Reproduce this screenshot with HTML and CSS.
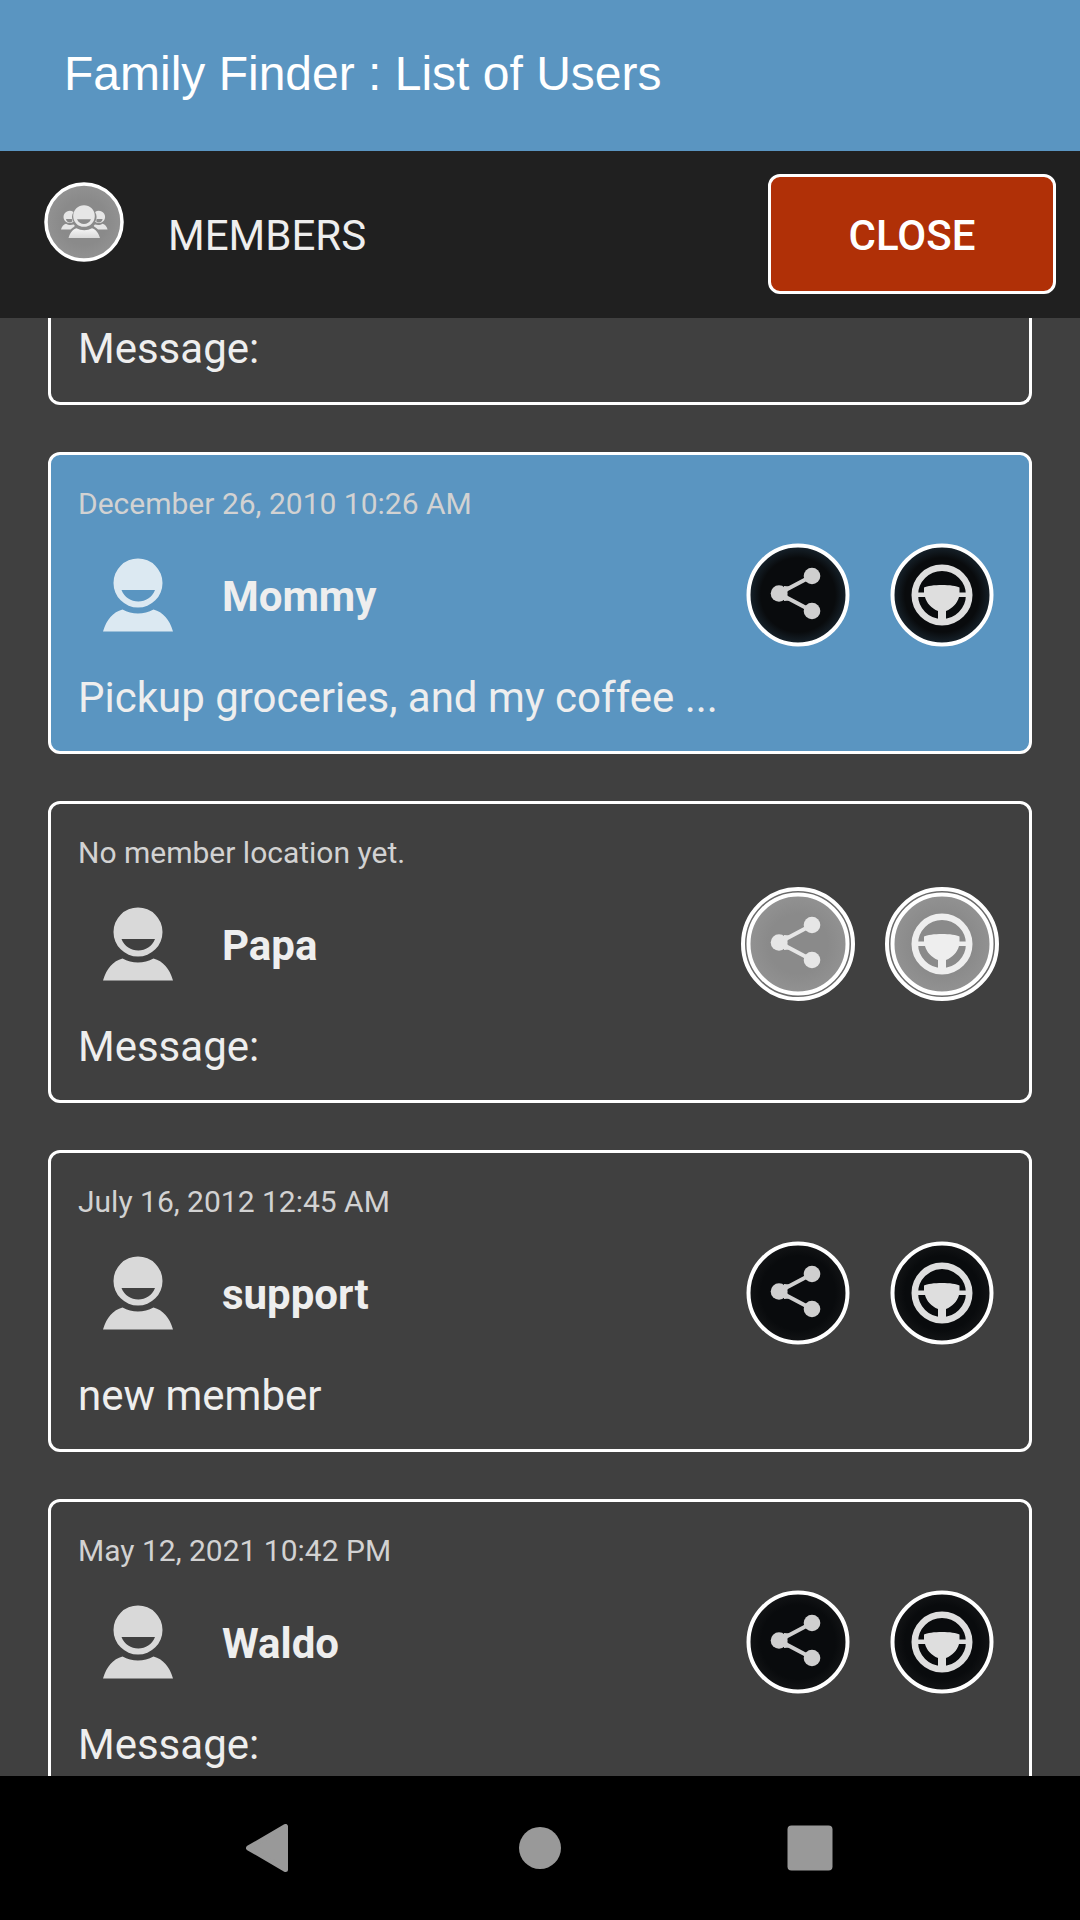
FILE: index.html
```html
<!DOCTYPE html>
<html lang="en">
<head>
<meta charset="utf-8">
<meta name="viewport" content="width=device-width, initial-scale=1">
<title>Family Finder : List of Users</title>
<link rel="stylesheet" href="styles.css">
</head>
<body>
<svg class="sprite" aria-hidden="true">
  <defs>
    <radialGradient id="dark"><stop offset="0.75" stop-color="#090b0d"/><stop offset="1" stop-color="#090b0d" stop-opacity="0.82"/></radialGradient>
    <radialGradient id="grey"><stop offset="0.6" stop-color="#8a8a8a"/><stop offset="1" stop-color="#929292"/></radialGradient>
    <linearGradient id="body" x1="0" y1="0" x2="0" y2="1"><stop offset="0.2" stop-color="#f0f0f0"/><stop offset="1" stop-color="#dadada"/></linearGradient>
  </defs>
  <symbol id="person" viewBox="0 0 70 74">
    <path fill-rule="evenodd" d="M10.500 25a24.500 24.500 0 0 1 49 0a24.500 24.500 0 0 1-49 0zM18.500 32C21.500 39.500 28 43.500 35.300 43.500S49 39.500 52 32z"/>
    <path d="M0 73.500C3.500 61.500 10 54 19.500 51.500C29 56.800 41 56.800 50.500 51.500C60 54 66.500 61.500 70 73.500z"/>
  </symbol>
  <symbol id="share" viewBox="0 0 116 116">
    <path fill="none" stroke="currentColor" stroke-width="4" d="M72 39L39 56.500L72 74"/>
    <path d="M44 49L50 49.500C46.500 53 46.500 60 50 63.500L44 64z"/>
    <circle cx="39" cy="56.500" r="8.300"/><circle cx="72" cy="39" r="8.300"/><circle cx="72" cy="74" r="8.300"/>
  </symbol>
  <symbol id="wheel" viewBox="0 0 116 116">
    <circle cx="58" cy="58" r="27.200" fill="none" stroke="currentColor" stroke-width="6.600"/>
    <path d="M32 55.500H40V50.500C46 47 70 47 75.500 50.500V55.500H84V60H75C73.500 66 68.500 71.500 62 74V86H54V74C47.500 71.500 42.500 66 41 60H32z"/>
  </symbol>
</svg>

<header class="app-header"><h1 class="app-title">Family Finder : List of Users</h1></header>

<div class="toolbar">
  <svg class="group-icon" viewBox="0 0 80 80" aria-hidden="true">
    <circle cx="40" cy="40" r="38" fill="url(#grey)" stroke="#fff" stroke-width="3.500"/>
    <g fill="#e6e6e6" fill-rule="evenodd">
      <path id="side" d="M19.500 35a6.300 6.300 0 0 1 10-5C27.500 33 27.500 37 29.500 39.800A6.300 6.300 0 0 1 19.500 35zM22 37c.5 3.500 4 4.500 6.500 2.200L27.800 37zM17 47.500C17.800 44.500 19.500 42.500 22 41.800C24 43.200 27 43.400 29.500 42.600C31 43.500 31.500 44.300 29 45.500L26.500 47.500z"/>
      <use href="#side" transform="translate(80.600 0) scale(-1 1)"/>
      <path d="M29.200 34a10.800 10.800 0 0 1 21.600 0a10.800 10.800 0 0 1-21.600 0zM33 37.300C34.500 40.600 37 42 40 42S45.500 40.600 47 37.300z"/>
      <path fill="url(#body)" d="M24.500 56C26 51 28.500 47.500 32.500 46.300C37 48.800 43.500 48.800 48 46.300C52 47.500 54.500 51 56 56z"/>
    </g>
  </svg>
  <h2 class="toolbar-title">MEMBERS</h2>
  <button class="close" type="button">CLOSE</button>
</div>

<main class="members">
  <article class="card card-tail">
    <p class="message">Message:</p>
  </article>

  <article class="card card-selected">
    <p class="date">December 26, 2010 10:26 AM</p>
    <div class="row">
      <svg class="avatar" aria-hidden="true"><use href="#person"/></svg>
      <h3 class="name">Mommy</h3>
      <button class="action" type="button" aria-label="Share"><svg viewBox="0 0 116 116"><circle class="disc" cx="58" cy="58" r="49.500"/><use href="#share"/></svg></button>
      <button class="action wheel" type="button" aria-label="Drive"><svg viewBox="0 0 116 116"><circle class="disc" cx="58" cy="58" r="49.500"/><use href="#wheel"/></svg></button>
    </div>
    <p class="message">Pickup groceries, and my coffee ...</p>
  </article>

  <article class="card">
    <p class="date">No member location yet.</p>
    <div class="row">
      <svg class="avatar" aria-hidden="true"><use href="#person"/></svg>
      <h3 class="name">Papa</h3>
      <button class="action" type="button" aria-label="Share" disabled><svg viewBox="0 0 116 116"><circle class="halo" cx="58" cy="58" r="55"/><circle class="disc" cx="58" cy="58" r="49.500"/><use href="#share"/></svg></button>
      <button class="action wheel" type="button" aria-label="Drive" disabled><svg viewBox="0 0 116 116"><circle class="halo" cx="58" cy="58" r="55"/><circle class="disc" cx="58" cy="58" r="49.500"/><use href="#wheel"/></svg></button>
    </div>
    <p class="message">Message:</p>
  </article>

  <article class="card">
    <p class="date">July 16, 2012 12:45 AM</p>
    <div class="row">
      <svg class="avatar" aria-hidden="true"><use href="#person"/></svg>
      <h3 class="name">support</h3>
      <button class="action" type="button" aria-label="Share"><svg viewBox="0 0 116 116"><circle class="disc" cx="58" cy="58" r="49.500"/><use href="#share"/></svg></button>
      <button class="action wheel" type="button" aria-label="Drive"><svg viewBox="0 0 116 116"><circle class="disc" cx="58" cy="58" r="49.500"/><use href="#wheel"/></svg></button>
    </div>
    <p class="message">new member</p>
  </article>

  <article class="card">
    <p class="date">May 12, 2021 10:42 PM</p>
    <div class="row">
      <svg class="avatar" aria-hidden="true"><use href="#person"/></svg>
      <h3 class="name">Waldo</h3>
      <button class="action" type="button" aria-label="Share"><svg viewBox="0 0 116 116"><circle class="disc" cx="58" cy="58" r="49.500"/><use href="#share"/></svg></button>
      <button class="action wheel" type="button" aria-label="Drive"><svg viewBox="0 0 116 116"><circle class="disc" cx="58" cy="58" r="49.500"/><use href="#wheel"/></svg></button>
    </div>
    <p class="message">Message:</p>
  </article>
</main>

<nav class="system-nav" aria-label="System">
  <button type="button" aria-label="Back"><svg viewBox="0 0 48 48"><path d="M2.500 24L39.500 2.500V45.500z" stroke="#999" stroke-width="5" stroke-linejoin="round"/></svg></button>
  <button type="button" aria-label="Home"><svg viewBox="0 0 48 48"><circle cx="24" cy="24" r="21"/></svg></button>
  <button type="button" aria-label="Recent apps"><svg viewBox="0 0 48 48"><rect x="1.500" y="1.500" width="45" height="45" rx="4"/></svg></button>
</nav>
</body>
</html>
```
FILE: styles.css
```css
* {
  box-sizing: border-box;
}

body {
  margin: 0;
  height: 100vh;
  display: flex;
  flex-direction: column;
  overflow: hidden;
  background: #404040;
  color: #eee;
  font-family: Roboto, sans-serif;
  font-size: 42px;
  line-height: 50px;
}

h1, h2, h3, p {
  margin: 0;
  font-size: inherit;
  font-weight: 400;
}

button {
  padding: 0;
  border: 0;
  background: none;
  color: inherit;
  font: inherit;
}

svg {
  display: block;
}

.sprite {
  position: absolute;
  width: 0;
  height: 0;
}

.app-header {
  flex: none;
  padding: 46px 64px 49px;
  background: #5a95c1;
  color: #fff;
}

.app-title {
  font-family: "Liberation Sans", Arial, sans-serif;
  font-size: 48px;
  line-height: 56px;
}

.toolbar {
  flex: none;
  display: flex;
  align-items: center;
  padding: 23px 24px 24px 44px;
  background: #202020;
}

.group-icon {
  width: 80px;
  height: 80px;
  align-self: flex-start;
  margin-top: 8px;
}

.toolbar-title {
  flex: 1;
  padding: 4px 0 0 44px;
}

.close {
  width: 288px;
  height: 120px;
  padding-top: 4px;
  border: 3px solid #fff;
  border-radius: 12px;
  background: #b03007;
  color: #fff;
  font-weight: 500;
}

.members {
  flex: 1;
  min-height: 0;
  overflow: hidden;
  display: flex;
  flex-direction: column;
  gap: 47px;
  padding: 0 48px;
}

.card {
  flex: none;
  padding: 31px 29px 28px 27px;
  border: 3px solid #fff;
  border-radius: 12px;
}

.card-tail {
  padding-top: 6px;
  border-top: 0;
  border-radius: 0 0 12px 12px;
}

.card-selected {
  background: #5a95c1;
}

.date {
  color: #d2d2d2;
  font-size: 30px;
  line-height: 36px;
}

.row {
  display: flex;
  align-items: center;
  margin: 15px 0 20px;
  padding-left: 25px;
}

.avatar {
  width: 70px;
  height: 74px;
  fill: #d9d9d9;
}

.card-selected .avatar {
  fill: #dce9f2;
}

.name {
  flex: 1;
  padding: 4px 0 0 49px;
  font-weight: 700;
}

.action {
  color: #cfcfcf;
}

.action.wheel {
  margin-left: 28px;
  color: #dedede;
}

.action svg {
  width: 116px;
  height: 116px;
  fill: currentColor;
}

.disc {
  fill: url(#dark);
  stroke: #fff;
  stroke-width: 4px;
}

.halo {
  fill: #6a6a6a;
  stroke: #fff;
  stroke-width: 4px;
}

.action:disabled {
  color: #e6e6e6;
}

.action.wheel:disabled {
  color: #eee;
}

.action:disabled .disc {
  fill: url(#grey);
}

.system-nav {
  flex: none;
  display: grid;
  grid-template-columns: repeat(3, 1fr);
  padding: 48px 12.5%;
  background: #000;
}

.system-nav button {
  display: grid;
  justify-items: center;
}

.system-nav svg {
  width: 48px;
  height: 48px;
  fill: #999;
}
```
